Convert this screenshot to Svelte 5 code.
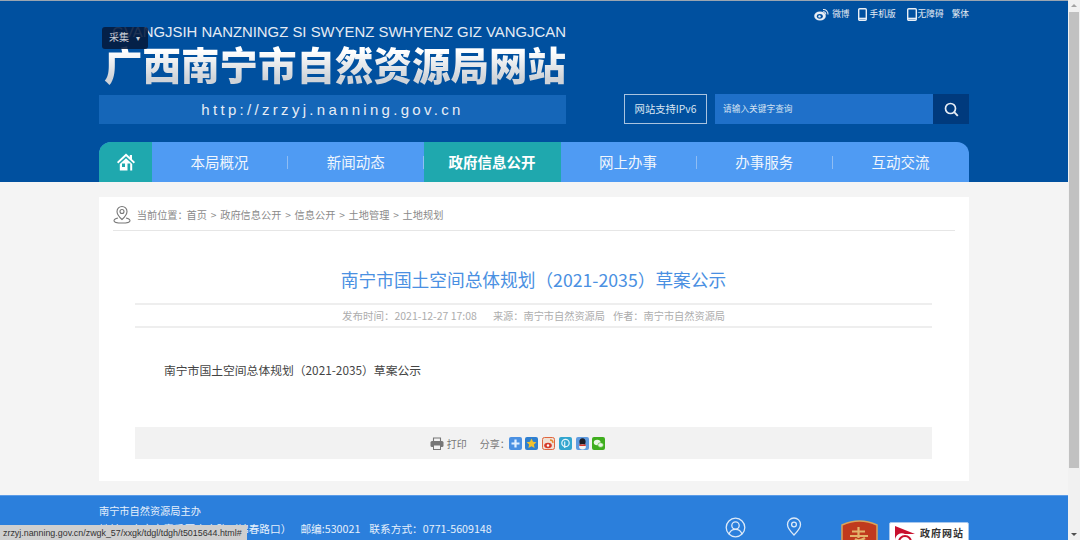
<script lang="ts">
	const navItems = ['本局概况', '新闻动态', '政府信息公开', '网上办事', '办事服务', '互动交流'];
	const crumbs = ['首页', '政府信息公开', '信息公开', '土地管理', '土地规划'];
	const title = '南宁市国土空间总体规划（2021-2035）草案公示';
</script>

<div class="screen">
	<div class="page">
		<header class="masthead">
			<div class="wrap top">
				<div class="logo">
					<div class="pinyin">GVANGJSIH NANZNINGZ SI SWYENZ SWHYENZ GIZ VANGJCAN</div>
					<div class="site-name">广西南宁市自然资源局网站</div>
					<div class="site-url">http://zrzyj.nanning.gov.cn</div>
				</div>
				<div class="tools">
					<div class="links">
						<span class="link">
							<svg width="15" height="13" viewBox="0 0 15 13">
								<ellipse cx="6" cy="8" rx="5.800" ry="4.500" fill="#e8eef5" />
								<ellipse cx="5.800" cy="8.300" rx="3" ry="2.400" fill="#00509f" />
								<circle cx="5.500" cy="8.400" r="1.200" fill="#e8eef5" />
								<path d="M9 1.500a4.500 4.500 0 0 1 5 5M9 3.800a2.200 2.200 0 0 1 2.700 2.600" fill="none" stroke="#e8eef5" stroke-width="1.100" />
							</svg>
							微博
						</span>
						<span class="link">
							<svg width="9" height="13" viewBox="0 0 9 13">
								<rect x="0.700" y="0.700" width="7.600" height="11.600" rx="1" fill="none" stroke="#e8eef5" stroke-width="1.400" />
								<path d="M1 10.500h7" stroke="#e8eef5" stroke-width="1.600" />
							</svg>
							手机版
						</span>
						<span class="link tablet">
							<svg width="10" height="13" viewBox="0 0 10 13">
								<rect x="0.700" y="0.700" width="8.600" height="11.600" rx="1" fill="none" stroke="#e8eef5" stroke-width="1.400" />
								<path d="M1 10.500h8" stroke="#e8eef5" stroke-width="1.600" />
							</svg>
							无障碍
						</span>
						<span class="link">繁体</span>
					</div>
					<div class="search-row">
						<div class="ipv6">网站支持IPv6</div>
						<div class="search">
							<span class="placeholder">请输入关键字查询</span>
							<span class="search-btn">
								<svg width="15" height="15" viewBox="0 0 15 15">
									<circle cx="6.500" cy="6.500" r="5" fill="none" stroke="#e6edf5" stroke-width="1.700" />
									<path d="M10.200 10.200l3.600 3.600" stroke="#e6edf5" stroke-width="1.900" />
								</svg>
							</span>
						</div>
					</div>
				</div>
			</div>
			<nav class="wrap nav">
				<span class="home">
					<svg width="18" height="18" viewBox="0 0 18 18">
						<path d="M9 0.500L0 9l1.200 1.400L9 3.200l7.800 7.200L18 9l-3-2.800V2h-2.200v2.100z" fill="#fff" />
						<path fill-rule="evenodd" d="M2.800 11L9 5.200 15.200 11v6.500H2.800zM5 10.500v3.500h3v-3.500zM10.500 10.500v7h2.700v-7z" fill="#fff" />
					</svg>
				</span>
				{#each navItems as item, i}
					<span class="nav-item" class:active={i === 2}>{item}</span>
				{/each}
			</nav>
		</header>

		<main class="card">
			<div class="crumbs">
				<svg width="18" height="19" viewBox="0 0 18 19">
					<path d="M9 1.500a5 5 0 0 0-5 5c0 3.500 5 8 5 8s5-4.500 5-8a5 5 0 0 0-5-5z" fill="none" stroke="#777" stroke-width="1.100" />
					<circle cx="9" cy="6.500" r="2" fill="none" stroke="#777" stroke-width="1.100" />
					<path d="M5 13c-2.500.5-4 1.500-4 2.700C1 17 4.500 18 9 18s8-1 8-2.300c0-1.200-1.500-2.200-4-2.700" fill="none" stroke="#777" stroke-width="1.100" />
				</svg>
				<span class="here">当前位置：</span>
				{#each crumbs as crumb, i}
					{#if i > 0}<span class="sep">&gt;</span>{/if}
					<span>{crumb}</span>
				{/each}
			</div>

			<article class="article">
				<h1>{title}</h1>
				<div class="meta">
					<span class="date">发布时间：2021-12-27 17:08</span>
					<span class="source">来源：南宁市自然资源局</span>
					<span class="author">作者：南宁市自然资源局</span>
				</div>
				<p class="body">{title}</p>
				<div class="share">
					<svg width="14" height="13" viewBox="0 0 14 13">
						<path d="M3.500 4V1h7v3" fill="none" stroke="#777" stroke-width="1.100" />
						<rect x="0.500" y="4" width="13" height="6" rx="1.500" fill="#777" />
						<rect x="3.500" y="8" width="7" height="4.500" fill="#f2f2f2" stroke="#777" />
					</svg>
					<span class="print">打印</span>
					<span>分享：</span>
					<span class="share-icons">
						<svg width="13" height="13" viewBox="0 0 13 13"><rect width="13" height="13" rx="2" fill="#4a90e2" /><path d="M6.500 2.500v8M2.500 6.500h8" stroke="#dfeeff" stroke-width="2.200" /></svg>
						<svg width="13" height="13" viewBox="0 0 13 13"><rect width="13" height="13" rx="2" fill="#2f7fd0" /><path d="M6.500 1.500l1.500 3.300 3.500.4-2.600 2.400.7 3.500-3.100-1.800-3.100 1.800.7-3.500-2.600-2.400 3.500-.4z" fill="#f2c230" /></svg>
						<svg width="13" height="13" viewBox="0 0 13 13"><rect width="13" height="13" rx="2" fill="#efe0d4" /><rect x="0.500" y="0.500" width="12" height="12" rx="2" fill="none" stroke="#e0663f" /><ellipse cx="6" cy="8.500" rx="3.800" ry="2.800" fill="#d63a2a" /><circle cx="6" cy="8.500" r="1.200" fill="#fff" /><path d="M8 3a3 3 0 0 1 3 3" fill="none" stroke="#e8872a" stroke-width="1.300" /></svg>
						<svg width="13" height="13" viewBox="0 0 13 13"><rect width="13" height="13" rx="2" fill="#32a6cf" /><circle cx="6.500" cy="6" r="3.700" fill="none" stroke="#e4f5fb" stroke-width="1.200" /><path d="M5.700 4.500v6.500" stroke="#e4f5fb" stroke-width="1.200" /></svg>
						<svg width="13" height="13" viewBox="0 0 13 13"><rect width="13" height="13" rx="2" fill="#5f9bdf" /><ellipse cx="6.500" cy="4.800" rx="3.100" ry="3.600" fill="#1d1d26" /><ellipse cx="6.500" cy="9.800" rx="3.400" ry="2.600" fill="#f4f4f4" /><path d="M3 7.500h7l-.5 1.600h-6z" fill="#d8352a" /></svg>
						<svg width="13" height="13" viewBox="0 0 13 13"><rect width="13" height="13" rx="2" fill="#3fae1e" /><ellipse cx="5.200" cy="5.500" rx="3.400" ry="2.800" fill="#e9f7e4" /><ellipse cx="8.600" cy="8" rx="2.800" ry="2.300" fill="#e9f7e4" stroke="#3fae1e" stroke-width="0.600" /></svg>
					</span>
				</div>
			</article>
		</main>

		<footer class="footer">
			<div class="wrap footer-inner">
				<div class="footer-text">
					<div>南宁市自然资源局主办</div>
					<div class="address">
						<span>地址：南宁市青秀区中泰路（锦春路口）</span>
						<span>邮编:530021</span>
						<span>联系方式：0771-5609148</span>
					</div>
				</div>
				<div class="footer-icons">
					<svg class="user" width="21" height="21" viewBox="0 0 21 21">
						<circle cx="10.500" cy="10.500" r="9.300" fill="none" stroke="#dce9f8" stroke-width="1.300" />
						<circle cx="10.500" cy="8.500" r="3.700" fill="none" stroke="#dce9f8" stroke-width="1.300" />
						<path d="M4 17c1-3 3.500-4.700 6.500-4.700S16 14 17 17" fill="none" stroke="#dce9f8" stroke-width="1.300" />
					</svg>
					<svg class="pin" width="16" height="19" viewBox="0 0 16 19">
						<path d="M8 1a6.500 6.500 0 0 0-6.500 6.500C1.500 11.500 8 18 8 18s6.500-6.500 6.500-10.500A6.500 6.500 0 0 0 8 1z" fill="none" stroke="#dce9f8" stroke-width="1.300" />
						<circle cx="8" cy="7.500" r="2.400" fill="none" stroke="#dce9f8" stroke-width="1.300" />
					</svg>
					<svg class="emblem" width="37" height="30" viewBox="0 0 37 30">
						<path d="M1 5Q18.500-3 36 5V30H1z" fill="#c03a1e" stroke="#dba45a" stroke-width="1.500" />
						<path d="M17.500 7v11M11 11.500h13M9 16h18" stroke="#e3b36b" stroke-width="2.200" fill="none" />
						<path d="M14 19q4 3 10-1" stroke="#e3b36b" stroke-width="2.200" fill="none" />
					</svg>
					<div class="gov-badge">
						<svg width="24" height="20" viewBox="0 0 24 20">
							<path d="M2 1l20 8H12a7 7 0 0 0-10 6z" fill="#c8102e" />
							<circle cx="12" cy="17" r="6" fill="none" stroke="#c8102e" stroke-width="2" />
						</svg>
						<span>政府网站</span>
					</div>
				</div>
			</div>
		</footer>
	</div>

	<div class="scrollbar">
		<span class="arrow up"></span>
		<span class="thumb"></span>
		<span class="arrow down"></span>
	</div>

	<!-- overlays from the browser/extension -->
	<div class="collect">采集<span class="caret">▾</span></div>
	<div class="status">zrzyj.nanning.gov.cn/zwgk_57/xxgk/tdgl/tdgh/t5015644.html#</div>
</div>

<style>
	:global(body) {
		margin: 0;
		overflow: hidden;
	}

	.screen {
		position: relative;
		display: flex;
		width: 1080px;
		height: 540px;
		overflow: hidden;
		font-family: 'Noto Sans CJK SC', 'Liberation Sans', sans-serif;
		font-size: 12px;
		background: #f4f4f4;
	}

	.page {
		width: 1068px;
		flex: none;
		display: flex;
		flex-direction: column;
		height: 540px;
		overflow: hidden;
	}

	.wrap {
		width: 870px;
		margin: 0 auto;
	}

	.masthead {
		height: 182px;
		flex: none;
		box-sizing: border-box;
		background: #00509f;
		border-top: 1px solid #9aa5b1;
		display: flex;
		flex-direction: column;
	}

	.top {
		display: flex;
		justify-content: space-between;
		height: 141px;
	}

	.logo {
		width: 467px;
		padding-top: 23px;
		box-sizing: border-box;
	}

	.pinyin {
		height: 16px;
		line-height: 16px;
		font-family: 'Liberation Sans', sans-serif;
		font-size: 14.900px;
		color: #e4ebf4;
		text-align: right;
		white-space: nowrap;
	}

	.site-name {
		height: 55px;
		line-height: 47px;
		font-size: 38.500px;
		font-weight: 900;
		white-space: nowrap;
		text-align: right;
		background: linear-gradient(#ffffff 20%, #cfd3d8 70%);
		-webkit-background-clip: text;
		background-clip: text;
		color: transparent;
	}

	.site-url {
		height: 29px;
		line-height: 29px;
		background: #1566b8;
		color: #e6edf6;
		text-align: center;
		font-family: 'Liberation Sans', sans-serif;
		font-size: 15px;
		letter-spacing: 3.300px;
	}

	.tools {
		width: 345px;
		display: flex;
		flex-direction: column;
		justify-content: space-between;
		padding-bottom: 18px;
		box-sizing: border-box;
	}

	.links {
		display: flex;
		justify-content: flex-end;
		gap: 8px;
		padding-top: 6px;
		color: #e4ebf4;
		font-size: 8.700px;
		line-height: 14px;
	}

	.link {
		display: flex;
		align-items: center;
		gap: 3px;
	}

	.link.tablet {
		margin-left: 3px;
		gap: 1px;
	}

	.search-row {
		display: flex;
		gap: 8px;
	}

	.ipv6 {
		width: 83px;
		height: 30px;
		box-sizing: border-box;
		border: 1px solid #a9c3df;
		color: #dbe6f2;
		font-size: 10.300px;
		line-height: 28px;
		text-align: center;
		white-space: nowrap;
	}

	.search {
		flex: 1;
		display: flex;
		justify-content: space-between;
		background: #1f70c9;
		height: 30px;
	}

	.placeholder {
		padding-left: 8px;
		color: #d4e2f2;
		font-size: 8.700px;
		line-height: 29px;
	}

	.search-btn {
		width: 36px;
		background: #003a7d;
		display: flex;
		align-items: center;
		justify-content: center;
	}

	.nav {
		display: flex;
		height: 40px;
		background: #4f9bf3;
		border-radius: 12px 12px 0 0;
		overflow: hidden;
	}

	.home {
		width: 53px;
		background: #1fa8ae;
		display: flex;
		align-items: center;
		justify-content: center;
		flex: none;
	}

	.nav-item {
		flex: 1;
		box-sizing: border-box;
		padding-right: 1px;
		color: #f0f6fd;
		font-size: 14.500px;
		line-height: 40px;
		text-align: center;
		background-image: linear-gradient(#8fbdf3, #8fbdf3);
		background-size: 1px 13px;
		background-position: right center;
		background-repeat: no-repeat;
	}

	.nav-item:last-child {
		background-image: none;
	}

	.nav-item.active {
		background: #1fa8ae;
		color: #fff;
		font-weight: 700;
	}

	.card {
		width: 870px;
		height: 284px;
		flex: none;
		margin: 15px auto 14px;
		background: #fff;
		padding: 0 14px;
		box-sizing: border-box;
	}

	.crumbs {
		height: 34px;
		box-sizing: border-box;
		border-bottom: 1px solid #e6e6e6;
		display: flex;
		align-items: center;
		gap: 3.800px;
		color: #8a8a8a;
		font-size: 10.200px;
		padding-top: 2px;
	}

	.here {
		margin-left: 2px;
		margin-right: 1px;
		width: 45px;
		white-space: nowrap;
	}

	.article {
		margin: 0 -23px 0 22px;
		width: 797px;
	}

	h1 {
		margin: 0;
		height: 74px;
		box-sizing: border-box;
		border-bottom: 2px solid #eeeeee;
		padding-top: 30px;
		line-height: 36px;
		font-size: 17.700px;
		font-weight: 400;
		color: #4a90e2;
		text-align: center;
	}

	.meta {
		height: 21px;
		border-bottom: 2px solid #eeeeee;
		display: flex;
		justify-content: center;
		align-items: center;
		color: #adadad;
		font-size: 10.200px;
	}

	.date {
		font-size: 10.500px;
	}

	.source {
		margin-left: 16px;
	}

	.author {
		margin-left: 8px;
	}

	.body {
		margin: 33px 0 0;
		padding-left: 29px;
		height: 66px;
		line-height: 18px;
		font-size: 11.800px;
		color: #444;
	}

	.share {
		height: 32px;
		background: #f2f2f2;
		display: flex;
		align-items: center;
		justify-content: center;
		gap: 3px;
		padding-right: 32px;
		color: #777;
		font-size: 10px;
	}

	.print {
		margin-right: 10px;
	}

	.share-icons {
		display: flex;
		gap: 3.700px;
		margin-left: -4px;
	}

	.footer {
		flex: 1;
		background: #2b7fdc;
		border-top: 1px solid #5b9ce8;
		color: #e6f0fb;
	}

	.footer-inner {
		display: flex;
	}

	.footer-text {
		width: 620px;
		padding-top: 6px;
		font-size: 10.200px;
		line-height: 17px;
	}

	.address {
		margin-top: 1px;
		display: flex;
		gap: 9px;
		white-space: nowrap;
		font-size: 10.700px;
	}

	.footer-icons {
		display: flex;
		align-items: flex-start;
	}

	.user {
		margin: 21px 0 0 7px;
	}

	.pin {
		margin: 21px 0 0 40px;
	}

	.emblem {
		margin: 24px 0 0 39px;
	}

	.gov-badge {
		margin: 26px 0 0 11px;
		width: 80px;
		height: 30px;
		box-sizing: border-box;
		background: #fff;
		border: 1px solid #a8c8ee;
		border-radius: 2px;
		display: flex;
		gap: 3px;
		color: #333;
		font-size: 10px;
		font-weight: 700;
		letter-spacing: 1px;
		line-height: 16px;
		padding: 2px 3px;
		white-space: nowrap;
	}

	.scrollbar {
		width: 12px;
		flex: none;
		background: #f1f1f1;
		display: flex;
		flex-direction: column;
		align-items: center;
		position: relative;
	}

	.thumb {
		width: 10px;
		height: 456px;
		background: #c1c1c1;
	}

	.arrow {
		height: 12px;
		width: 12px;
		position: relative;
	}

	.arrow::after {
		content: '';
		position: absolute;
		left: 3px;
		top: 4px;
		border-left: 3px solid transparent;
		border-right: 3px solid transparent;
	}

	.arrow.up::after {
		border-bottom: 3px solid #a3a3a3;
	}

	.arrow.down {
		margin-top: auto;
	}

	.arrow.down::after {
		top: 5px;
		border-top: 3px solid #505050;
	}

	.collect {
		position: absolute;
		left: 102px;
		top: 27px;
		width: 46px;
		height: 22px;
		box-sizing: border-box;
		padding-left: 7px;
		background: rgba(5, 25, 60, 0.88);
		border-radius: 3px;
		color: #c9ced6;
		font-size: 10px;
		line-height: 20px;
	}

	.caret {
		margin-left: 7px;
		font-size: 8px;
	}

	.status {
		position: absolute;
		left: 0;
		bottom: 0;
		height: 15px;
		width: 247px;
		box-sizing: border-box;
		padding-left: 3px;
		background: #cfcfcf;
		color: #333;
		font-family: 'Liberation Sans', sans-serif;
		font-size: 8.900px;
		line-height: 16px;
		white-space: nowrap;
	}
</style>
